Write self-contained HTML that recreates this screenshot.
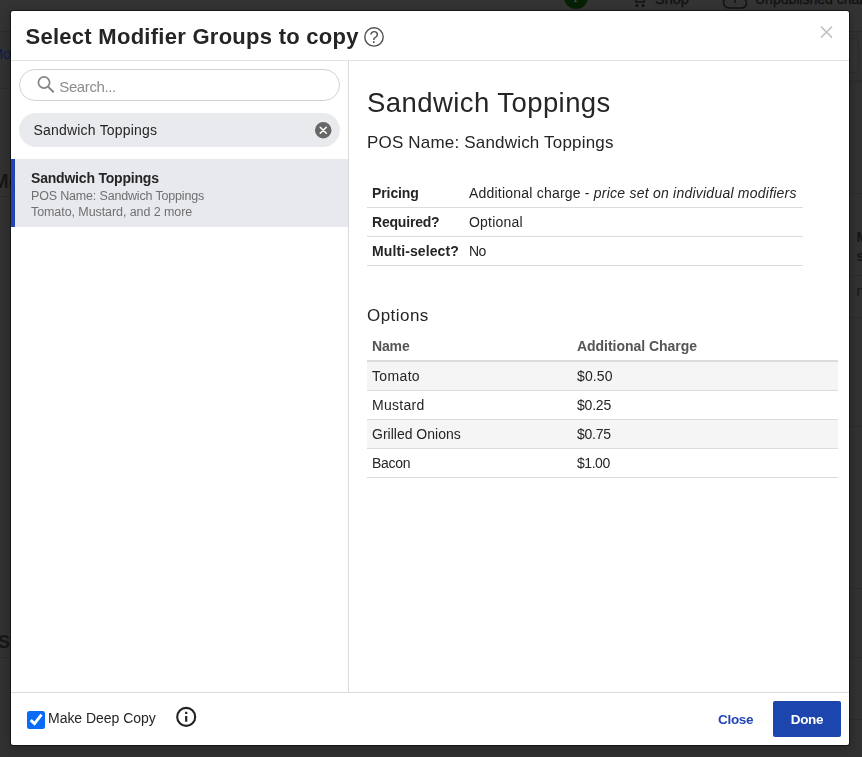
<!DOCTYPE html>
<html>
<head>
<meta charset="utf-8">
<title>Select Modifier Groups to copy</title>
<style>
*{box-sizing:border-box;margin:0;padding:0}
html,body{width:862px;height:757px;overflow:hidden}
body{background:#313131;font-family:"Liberation Sans",sans-serif;color:#252525;position:relative}
.bg{position:absolute;left:0;top:0;width:862px;height:757px;overflow:hidden}
.bg .top{position:absolute;left:0;top:0;width:862px;height:31px;background:#333}
.bg span{position:absolute;white-space:nowrap;font-weight:bold}
.bg .ln{position:absolute;left:0;width:862px;height:1px;background:#2b2b2b}
.modal{position:absolute;left:11px;top:11px;width:838px;height:734px;background:#fff;border-radius:2px;overflow:hidden;will-change:transform;box-shadow:0 0 0 1px rgba(0,0,0,.45),0 2px 8px rgba(0,0,0,.3)}
.hdr{position:absolute;left:0;top:0;width:838px;height:50px;border-bottom:1px solid #e1e2ea}
.hdr h1{position:absolute;left:14.5px;top:10.5px;font-size:22px;line-height:30px;font-weight:bold;color:#252525;white-space:nowrap;letter-spacing:0.27px}
.left{position:absolute;left:0;top:50px;width:338px;height:631px;border-right:1px solid #dcdcdc}
.search{position:absolute;left:8px;top:8px;width:321px;height:32px;border:1px solid #d2d2d2;border-radius:16px;background:#fff}
.search span{position:absolute;left:39.3px;top:8px;font-size:15px;line-height:18px;color:#8c8c8c;letter-spacing:-0.4px}
.chip{position:absolute;left:8px;top:52px;width:321px;height:34px;border-radius:17px;background:#e9eaee}
.chip span{position:absolute;left:14.5px;top:8px;font-size:14px;line-height:18px;color:#252525;letter-spacing:0.2px}
.item{position:absolute;left:0;top:98px;width:337px;height:68px;background:#e8e9ee;border-left:4px solid #2245b5}
.item b{position:absolute;left:16px;top:11px;font-size:14px;line-height:16px;color:#252525;letter-spacing:-0.2px;white-space:nowrap}
.item i{position:absolute;left:16px;font-style:normal;font-size:12.5px;line-height:14px;color:#707070;white-space:nowrap}
.right{position:absolute;left:338px;top:50px;width:500px;height:631px}
.right h2{position:absolute;left:18px;top:23.6px;font-size:27.5px;line-height:36px;font-weight:normal;color:#252525;white-space:nowrap;letter-spacing:0.43px}
.right h3{position:absolute;left:18px;top:69.8px;font-size:17px;line-height:24px;font-weight:normal;color:#252525;white-space:nowrap;letter-spacing:0.185px}
.right h4{position:absolute;left:18px;top:243px;font-size:17px;line-height:24px;font-weight:normal;color:#252525;letter-spacing:0.45px}
table{border-collapse:separate;border-spacing:0;position:absolute;font-size:14px}
td,th{text-align:left;white-space:nowrap;padding:0 5px;height:29px;vertical-align:middle;line-height:16px}
.t1{left:18px;top:118px;width:436px}
.t1 td{border-bottom:1px solid #dcdcdc;letter-spacing:0.21px}
.t1 td:first-child{font-weight:bold;width:97px;letter-spacing:-0.1px}
.t1 em{letter-spacing:0.23px}
.t2{left:18px;top:271px;width:471px}
.t2 th{color:#555;border-bottom:2px solid #dcdcdc;height:30px;letter-spacing:-0.12px}
.t2 td{border-bottom:1px solid #dcdcdc;letter-spacing:0.1px}
.t2 tr.s td{background:#f5f5f5}
.ftr{position:absolute;left:0;top:681px;width:838px;height:53px;border-top:1px solid #dcdcdc}
.cb{position:absolute;left:16px;top:18px;width:18px;height:18px;border-radius:2.5px;background:#0a6cf6}
.ftr .lbl{position:absolute;left:37px;top:15.5px;font-size:14px;line-height:18px;color:#252525;letter-spacing:-0.03px}
.ftr .close{position:absolute;left:707px;top:18px;font-size:13.5px;line-height:18px;font-weight:bold;color:#2245b5;letter-spacing:-0.3px}
.ftr .done{position:absolute;left:762px;top:8px;width:68px;height:36px;border-radius:2px;background:#1c45ae;color:#fff;font-weight:bold;font-size:13.5px;line-height:37px;text-align:center;letter-spacing:-0.3px}
svg{position:absolute;overflow:visible}
</style>
</head>
<body>
<div class="bg">
  <div class="top"></div>
  <div class="ln" style="top:31px"></div>
  <div class="ln" style="top:88px;width:11px"></div>
  <div class="ln" style="top:196px;width:11px"></div>
  <div class="ln" style="top:657px;width:11px"></div>
  <div class="ln" style="top:80px;left:849px"></div>
  <div class="ln" style="top:82px;left:849px"></div>
  <div class="ln" style="top:193px;left:849px"></div>
  <div class="ln" style="top:275px;left:849px"></div>
  <div class="ln" style="top:317px;left:849px"></div>
  <div class="ln" style="top:426px;left:849px"></div>
  <div class="ln" style="top:588px;left:849px"></div>
  <div class="ln" style="top:657px;left:849px"></div>
  <div class="ln" style="top:719px;left:849px"></div>
  <div style="position:absolute;left:820px;top:38px;width:39px;height:35px;border:1px solid #2b2b2b;border-radius:4px;background:#323232"></div>
  <div style="position:absolute;left:564px;top:-15px;width:24px;height:24px;border-radius:12px;background:#052005"></div>
  <span style="left:572px;top:-9px;font-size:13px;line-height:14px;color:#555;font-weight:normal;font-family:'Liberation Serif',serif">1</span>
  <svg style="left:631px;top:-8px" width="16" height="16" viewBox="0 0 16 16"><path d="M0 1H3L5 10H13L14.5 4H4" fill="none" stroke="#131313" stroke-width="1.5"/><circle cx="6" cy="13.5" r="1.5" fill="#131313"/><circle cx="12" cy="13.5" r="1.5" fill="#131313"/></svg>
  <span style="left:655px;top:-9px;font-size:14.5px;line-height:16px;color:#111;font-weight:normal;-webkit-text-stroke:0.3px #111">Shop</span>
  <svg style="left:723px;top:-8px" width="24" height="17" viewBox="0 0 24 17"><path d="M6 16H18A5 5 0 0 0 19 6A7 7 0 0 0 6 5A5.5 5.5 0 0 0 6 16Z" fill="none" stroke="#131313" stroke-width="1.5"/><path d="M12 5V11" stroke="#131313" stroke-width="1.5"/></svg>
  <span style="left:755px;top:-9px;font-size:14px;line-height:16px;color:#111;font-weight:normal;-webkit-text-stroke:0.3px #111">Unpublished changes</span>
  <span style="left:-9px;top:46px;font-size:14.5px;line-height:16px;color:#0e1a4d;font-weight:normal">Mo</span>
  <span style="left:-8px;top:169px;font-size:20px;line-height:24px;color:#161616">Mo</span>
  <span style="left:-2px;top:631px;font-size:18px;line-height:22px;color:#161616">Su</span>
  <span style="left:856.5px;top:229px;font-size:14px;line-height:16px;color:#161616">M</span>
  <span style="left:856.5px;top:248px;font-size:14px;line-height:16px;color:#161616">s</span>
  <span style="left:856.5px;top:283px;font-size:14px;line-height:16px;color:#161616;font-weight:normal">n</span>
</div>
<div class="modal">
  <div class="hdr">
    <h1>Select Modifier Groups to copy</h1>
    <svg style="left:353px;top:16px" width="20" height="20" viewBox="0 0 20 20"><circle cx="10" cy="9.9" r="9.2" fill="none" stroke="#505050" stroke-width="1.4"/><text x="10" y="16" font-size="16.5" text-anchor="middle" fill="#505050" font-family="Liberation Sans, sans-serif">?</text></svg>
    <svg style="left:809px;top:15px" width="13" height="13" viewBox="0 0 13 13"><path d="M1 0.6L12 11.6M12 0.6L1 11.6" stroke="#c2c2c2" stroke-width="1.5" fill="none"/></svg>
  </div>
  <div class="left">
    <div class="search">
      <svg style="left:17px;top:6px" width="18" height="18" viewBox="0 0 18 18"><circle cx="7" cy="6.5" r="5.6" fill="none" stroke="#858585" stroke-width="1.7"/><path d="M11 10.6L16.7 16.3" stroke="#858585" stroke-width="2" stroke-linecap="butt"/></svg>
      <span>Search...</span>
    </div>
    <div class="chip">
      <span>Sandwich Toppings</span>
      <svg style="left:296px;top:9px" width="16.5" height="16.5" viewBox="0 0 16.5 16.5"><circle cx="8.25" cy="8.25" r="8.25" fill="#676767"/><path d="M5.2 5.2L11.3 11.3M11.3 5.2L5.2 11.3" stroke="#fff" stroke-width="1.5" stroke-linecap="round"/></svg>
    </div>
    <div class="item">
      <b>Sandwich Toppings</b>
      <i style="top:30px;letter-spacing:-0.17px">POS Name: Sandwich Toppings</i>
      <i style="top:46px;letter-spacing:-0.08px">Tomato, Mustard, and 2 more</i>
    </div>
  </div>
  <div class="right">
    <h2>Sandwich Toppings</h2>
    <h3>POS Name: Sandwich Toppings</h3>
    <table class="t1">
      <tr><td>Pricing</td><td>Additional charge - <em>price set on individual modifiers</em></td></tr>
      <tr><td style="letter-spacing:-0.2px">Required?</td><td>Optional</td></tr>
      <tr><td style="letter-spacing:0.1px">Multi-select?</td><td style="letter-spacing:-0.5px">No</td></tr>
    </table>
    <h4>Options</h4>
    <table class="t2">
      <tr><th style="width:205px;letter-spacing:-0.15px">Name</th><th style="letter-spacing:-0.03px">Additional Charge</th></tr>
      <tr class="s"><td style="letter-spacing:0.35px">Tomato</td><td>$0.50</td></tr>
      <tr><td style="letter-spacing:0.3px">Mustard</td><td style="letter-spacing:-0.2px">$0.25</td></tr>
      <tr class="s"><td style="letter-spacing:0">Grilled Onions</td><td style="letter-spacing:-0.25px">$0.75</td></tr>
      <tr><td style="letter-spacing:-0.3px">Bacon</td><td style="letter-spacing:-0.45px">$1.00</td></tr>
    </table>
  </div>
  <div class="ftr">
    <div class="cb"><svg style="left:0;top:0" width="18" height="18" viewBox="0 0 18 18"><path d="M3.7 9.1L7.5 12.6L14.5 3.6" stroke="#fff" stroke-width="2.8" fill="none" stroke-linecap="butt" stroke-linejoin="miter"/></svg></div>
    <span class="lbl">Make Deep Copy</span>
    <svg style="left:165px;top:14px" width="20" height="20" viewBox="0 0 20 20"><circle cx="10.2" cy="9.9" r="9" fill="none" stroke="#222" stroke-width="2.1"/><rect x="9.1" y="4.8" width="2.2" height="2.2" fill="#222"/><path d="M10.2 8.9V14.8" stroke="#222" stroke-width="2.2"/></svg>
    <span class="close">Close</span>
    <div class="done">Done</div>
  </div>
</div>
</body>
</html>
